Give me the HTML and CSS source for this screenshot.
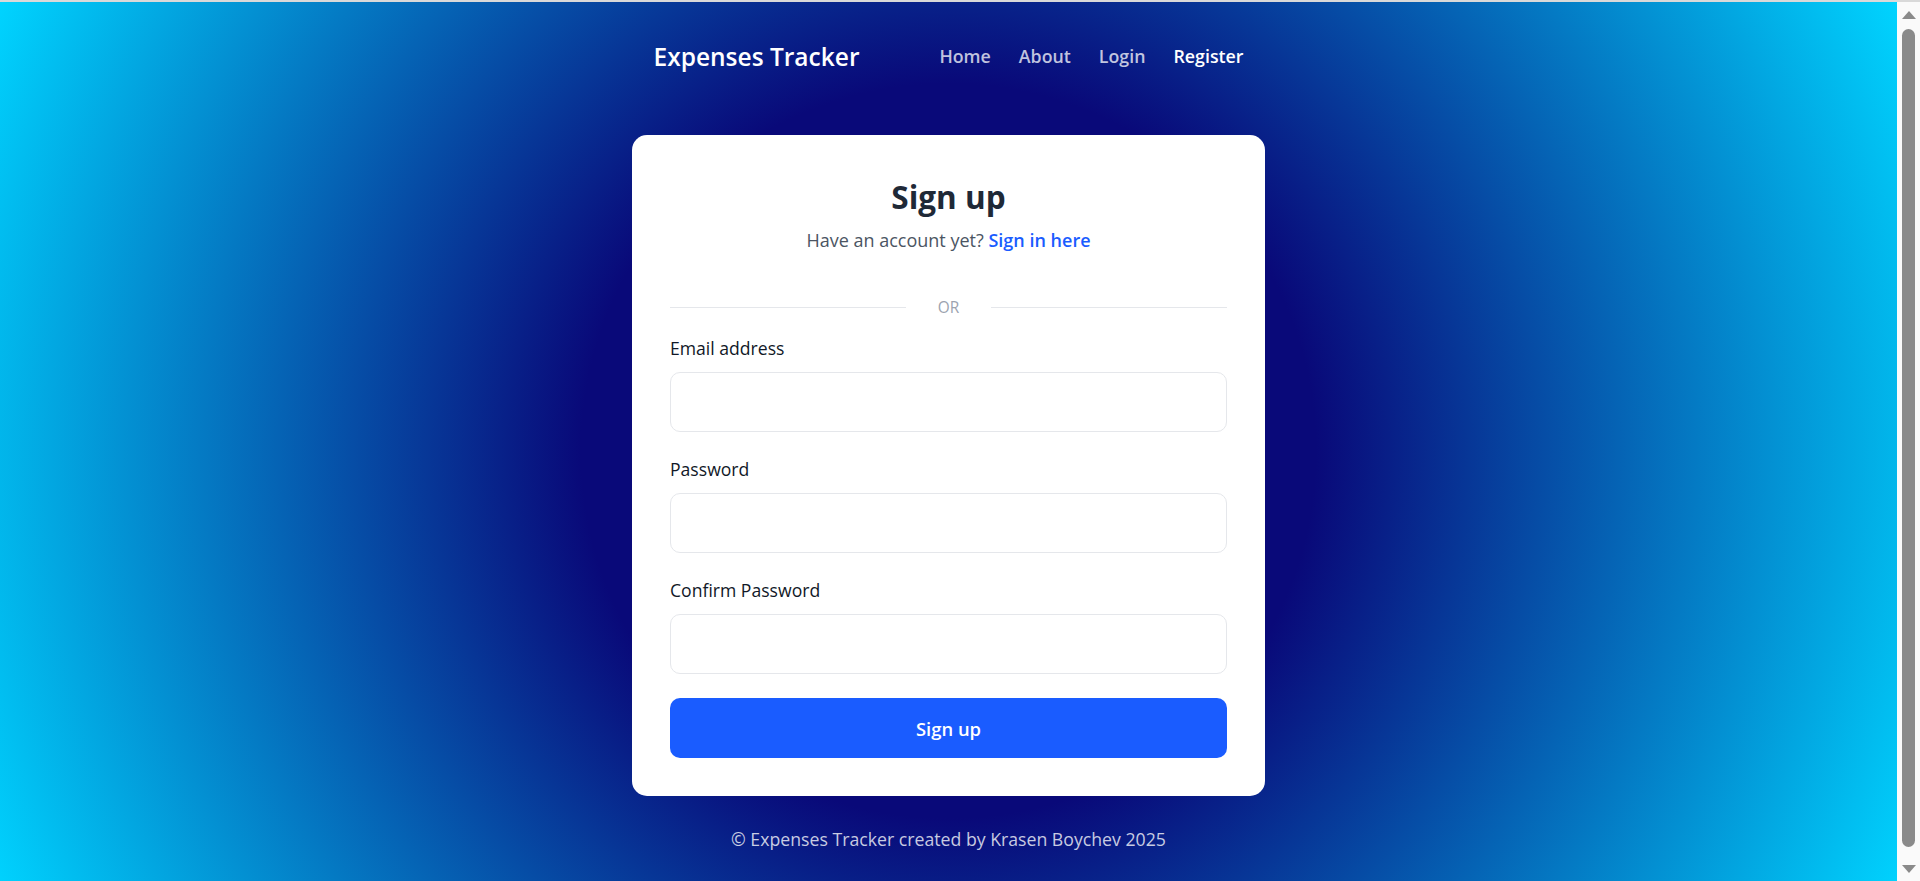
FILE: index.html
```html
<!DOCTYPE html>
<html lang="en">
<head>
<meta charset="utf-8">
<title>Sign up - Expenses Tracker</title>
<link rel="stylesheet" href="styles.css">
</head>
<body>
<div class="window">
  <div class="page">
    <header class="site-header">
      <nav class="nav">
        <a class="brand" href="#">Expenses Tracker</a>
        <ul class="nav-links">
          <li><a href="#">Home</a></li>
          <li><a href="#">About</a></li>
          <li><a href="#">Login</a></li>
          <li><a class="active" href="#">Register</a></li>
        </ul>
      </nav>
    </header>
    <main class="main">
      <section class="card">
        <h1 class="card-title">Sign up</h1>
        <p class="card-sub">Have an account yet? <a href="#">Sign in here</a></p>
        <div class="divider"><span>OR</span></div>
        <form class="form">
          <div class="field">
            <label for="email">Email address</label>
            <input id="email" type="email">
          </div>
          <div class="field">
            <label for="password">Password</label>
            <input id="password" type="password">
          </div>
          <div class="field">
            <label for="confirm">Confirm Password</label>
            <input id="confirm" type="password">
          </div>
          <button type="submit" class="btn">Sign up</button>
        </form>
      </section>
    </main>
    <footer class="footer">© Expenses Tracker created by Krasen Boychev 2025</footer>
  </div>
  <div class="scrollbar" aria-hidden="true">
    <div class="sb-btn"><span class="arrow-up"></span></div>
    <div class="sb-thumb"></div>
    <div class="sb-btn"><span class="arrow-down"></span></div>
  </div>
</div>
</body>
</html>
```
FILE: styles.css
```css
html, body {
  margin: 0;
  padding: 0;
  height: 100%;
}

body {
  font-family: "Open Sans", "Noto Sans", "Liberation Sans", sans-serif;
  background: #fafafa;
}

.window {
  height: 100vh;
  box-sizing: border-box;
  border-top: 2px solid #d9d9d9;
  display: flex;
  overflow: hidden;
}

.page {
  flex: 1;
  min-width: 0;
  overflow: hidden;
  background: radial-gradient(circle farthest-corner at 50% 449px, #090979 35%, #00d4ff 100%);
  display: flex;
  flex-direction: column;
  align-items: center;
}

.site-header {
  width: 590px;
  padding-top: 34px;
}

.nav {
  height: 40px;
  display: flex;
  align-items: center;
  justify-content: space-between;
}

.brand {
  color: #fff;
  font-size: 24.5px;
  font-weight: 600;
  text-decoration: none;
}

.nav-links {
  list-style: none;
  margin: 0;
  padding: 0;
  display: flex;
  gap: 28px;
}

.nav-links a {
  color: rgba(255, 255, 255, 0.75);
  font-size: 17.8px;
  font-weight: 600;
  text-decoration: none;
}

.nav-links a.active {
  color: #fff;
}

.main {
  margin-top: 59px;
}

.card {
  width: 633px;
  box-sizing: border-box;
  padding: 38px;
  background: #fff;
  border-radius: 15px;
}

.card-title {
  margin: 0;
  text-align: center;
  font-size: 31.5px;
  line-height: 48px;
  font-weight: 700;
  color: #1f2937;
}

.card-sub {
  margin: 6px 0 0;
  text-align: center;
  font-size: 18px;
  line-height: 26px;
  color: #4b5563;
}

.card-sub a {
  color: #1a5cff;
  font-weight: 600;
  text-decoration: none;
}

.divider {
  margin-top: 44px;
  height: 20px;
  display: flex;
  align-items: center;
  gap: 32px;
  font-size: 15.4px;
  color: #9ca3af;
}

.divider::before,
.divider::after {
  content: "";
  flex: 1;
  height: 1px;
  background: #e5e7eb;
}

.form {
  margin-top: 18px;
  display: flex;
  flex-direction: column;
  gap: 24px;
}

.field {
  display: flex;
  flex-direction: column;
  gap: 11px;
}

.field label {
  font-size: 17.6px;
  line-height: 26px;
  color: #111827;
}

.field input {
  height: 60px;
  box-sizing: border-box;
  border: 1px solid #e5e7eb;
  border-radius: 10px;
  background: #fff;
  padding: 0 16px;
  font: inherit;
  outline: none;
}

.btn {
  height: 60px;
  border: 0;
  border-radius: 10px;
  background: #1a5cff;
  color: #fff;
  font-family: inherit;
  font-size: 18.4px;
  font-weight: 600;
  cursor: pointer;
}

.footer {
  margin-top: 30px;
  line-height: 26px;
  font-size: 17.7px;
  color: rgba(255, 255, 255, 0.78);
}

.scrollbar {
  width: 23px;
  flex: none;
  background: #fafafa;
  display: flex;
  flex-direction: column;
  align-items: center;
}

.sb-btn {
  height: 25px;
  flex: none;
  display: flex;
  align-items: center;
  justify-content: center;
}

.arrow-up {
  width: 0;
  height: 0;
  border-left: 7px solid transparent;
  border-right: 7px solid transparent;
  border-bottom: 8px solid #8a8a8a;
}

.arrow-down {
  width: 0;
  height: 0;
  border-left: 7px solid transparent;
  border-right: 7px solid transparent;
  border-top: 8px solid #8a8a8a;
}

.sb-thumb {
  flex: 1;
  width: 13px;
  margin: 2px 0 9px;
  border-radius: 7px;
  background: #8a8a8a;
}
```
